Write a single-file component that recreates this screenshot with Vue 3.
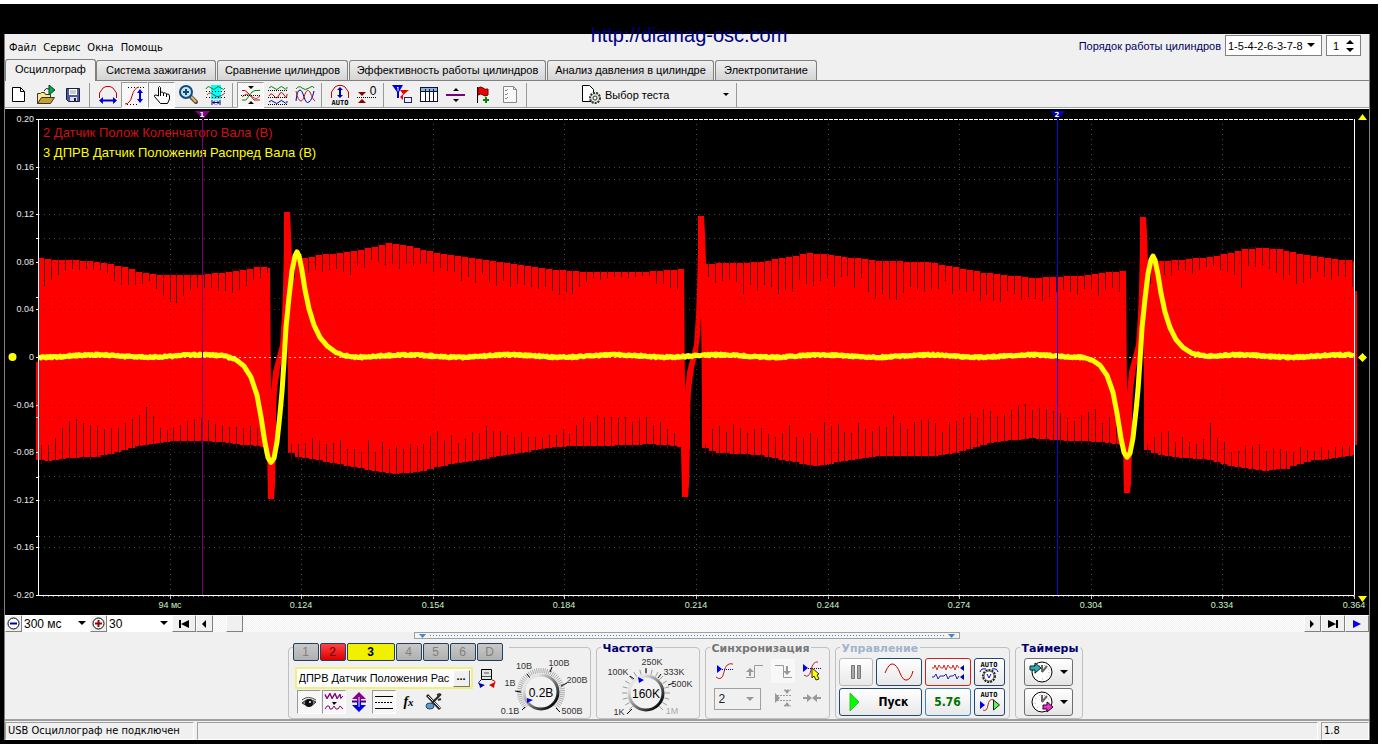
<script setup>
import { ref } from 'vue'

const menu = ['Файл', 'Сервис', 'Окна', 'Помощь']
const tabs = [
  { label: 'Осциллограф', cls: 'w91' },
  { label: 'Система зажигания', cls: 'w120' },
  { label: 'Сравнение цилиндров', cls: 'w131' },
  { label: 'Эффективность работы цилиндров', cls: 'w197' },
  { label: 'Анализ давления в цилиндре', cls: 'w167' },
  { label: 'Электропитание', cls: 'w102' }
]
const activeTab = ref(0)
const channels = ['1', '2', '3', '4', '5', '6', 'D']
const channelName = ref('ДПРВ Датчик Положения Рас')

const Y0 = 357
const STEP = 47.6
const fmt = (v) => (v === 0 ? '0' : v.toFixed(2))
const yLabels = [0.2, 0.16, 0.12, 0.08, 0.04, 0, -0.04, -0.08, -0.12, -0.16, -0.2].map((v) => ({
  text: fmt(v),
  y: Math.round(Y0 - (v / 0.04) * STEP)
}))
const gridY = [0.16, 0.15, 0.12, 0.1, 0.08, 0.05, 0.04].flatMap((v) => [
  Math.round(Y0 - (v / 0.04) * STEP) + 0.5,
  Math.round(Y0 + (v / 0.04) * STEP) + 0.5
])
const xTicks = [
  [170, '94 мс'], [301, '0.124'], [433, '0.154'], [564, '0.184'], [696, '0.214'],
  [828, '0.244'], [959, '0.274'], [1091, '0.304'], [1222, '0.334'], [1354, '0.364']
]

function at(points, x) {
  for (let i = 1; i < points.length; i++) {
    if (x <= points[i][0]) {
      const [x0, y0] = points[i - 1]
      const [x1, y1] = points[i]
      return y0 + ((y1 - y0) * Math.max(0, x - x0)) / (x1 - x0)
    }
  }
  return points[points.length - 1][1]
}
const noise = (n) => {
  const s = Math.sin(n * 12.9898 + 4.1) * 43758.5453
  return s - Math.floor(s)
}

const blocks = [
  {
    from: 38, to: 270,
    top: [[38, 257], [55, 260], [78, 260], [105, 263], [125, 267], [140, 272], [160, 275], [200, 275], [220, 273], [245, 270], [258, 267], [270, 268]],
    bottom: [[38, 459], [50, 461], [70, 458], [95, 457], [112, 454], [130, 448], [150, 444], [170, 441], [205, 441], [230, 443], [262, 447], [270, 448]],
    topDip: [[38, 34], [60, 16], [70, 10], [105, 8], [120, 20], [150, 8], [172, 32], [195, 12], [235, 24], [270, 6]],
    lowDip: [[38, 20], [50, 12], [75, 38], [90, 34], [120, 20], [152, 36], [166, 8], [180, 16], [205, 22], [235, 16], [270, 22]]
  },
  {
    from: 288, to: 684,
    top: [[288, 262], [302, 259], [320, 255], [343, 253], [365, 249], [390, 243], [410, 246], [429, 251], [455, 256], [477, 259], [500, 262], [520, 265], [547, 269], [590, 272], [638, 272], [660, 271], [684, 269]],
    bottom: [[288, 451], [295, 456], [317, 460], [343, 465], [370, 470], [397, 474], [424, 471], [450, 464], [483, 459], [515, 454], [547, 448], [574, 446], [606, 446], [654, 444], [684, 447]],
    topDip: [[288, 18], [320, 22], [390, 26], [430, 20], [470, 30], [520, 22], [565, 32], [590, 8], [650, 7], [672, 30], [684, 24]],
    lowDip: [[288, 16], [340, 28], [400, 30], [440, 32], [500, 28], [550, 12], [590, 28], [645, 32], [684, 10]]
  },
  {
    from: 702, to: 1125,
    top: [[702, 264], [734, 263], [761, 262], [783, 258], [810, 253], [847, 257], [879, 261], [927, 262], [959, 268], [986, 273], [1013, 276], [1034, 278], [1050, 277], [1077, 276], [1100, 273], [1125, 271]],
    bottom: [[702, 447], [718, 453], [761, 455], [788, 461], [817, 466], [852, 460], [879, 456], [933, 456], [959, 452], [986, 444], [1029, 438], [1056, 440], [1099, 442], [1125, 445]],
    topDip: [[702, 20], [730, 32], [780, 38], [850, 30], [880, 44], [930, 30], [990, 28], [1060, 26], [1125, 24]],
    lowDip: [[702, 22], [760, 32], [820, 38], [860, 40], [930, 36], [1000, 34], [1060, 28], [1125, 32]]
  },
  {
    from: 1144, to: 1354,
    top: [[1144, 262], [1170, 261], [1200, 258], [1222, 255], [1240, 250], [1256, 248], [1280, 249], [1300, 254], [1325, 258], [1354, 261]],
    bottom: [[1144, 448], [1156, 454], [1180, 458], [1205, 459], [1230, 466], [1262, 471], [1285, 469], [1310, 461], [1335, 458], [1354, 455]],
    topDip: [[1144, 32], [1175, 20], [1215, 14], [1240, 40], [1256, 28], [1270, 26], [1290, 34], [1310, 26], [1354, 30]],
    lowDip: [[1144, 14], [1165, 24], [1200, 24], [1215, 40], [1235, 18], [1260, 26], [1300, 14], [1354, 10]]
  }
]

const PITCH = 6.95
let body = ''
let notches = ''
blocks.forEach((b, k) => {
  const tops = []
  const lows = []
  let i = 0
  for (let x = b.from; x < b.to - 1; x += PITCH, i++) {
    const end = Math.min(x + PITCH, b.to)
    const mid = (x + end) / 2
    const t = Math.round(at(b.top, mid))
    const l = Math.round(at(b.bottom, mid))
    tops.push(`${x} ${t} L${end} ${t}`)
    lows.unshift(`${end} ${l} L${x} ${l}`)
    if (i > 0) {
      const spread = k === 0 ? 0.15 : 0.5
      const up = at(b.topDip, x) * (1 - spread * noise(i + k * 97))
      const dn = at(b.lowDip, x) * (1.1 - spread * noise(i + 31 + k * 53))
      const px = Math.floor(x) + 0.5
      const qx = Math.floor(x - 3) + 0.5
      notches += `M${px} ${t - 2}V${Math.round(t + up)}`
      notches += `M${qx} ${l + 3}V${Math.round(l - dn)}`
    }
  }
  body += `M${tops.join('L')}L${lows.join('L')}Z`
})

const events = [
  { x: 271, tip: 499, peak: 212 },
  { x: 685, tip: 497, peak: 216 },
  { x: 1127, tip: 493, peak: 217 }
]
const spikes = events
  .map(({ x, tip, peak }) => {
    const p = [
      [-3, tip], [3, tip], [4, 484], [5, 447], [5, 415], [6, 390], [9, 368], [13, 352], [15, 335],
      [16, 315], [17, 395], [18, 447], [24, 440], [21, 262], [20, 234], [19, peak], [13, peak],
      [13, 248], [12, 290], [11, 315], [9, 345], [5, 360], [2, 372], [0, 392], [-1, 270], [-5, 275], [-4, 447]
    ]
    return 'M' + p.map(([dx, y]) => `${x + dx} ${y}`).join('L') + 'Z'
  })
  .join('')

function cam(x) {
  const pts = [
    [0, 0], [225, 0], [236, 3], [244, 9], [251, 20], [257, 38], [261, 60], [265, 86], [268, 101], [271, 106],
    [274, 102], [277, 86], [280, 58], [282, 36], [284, 6], [286, -28], [289, -58], [292, -84], [295, -99],
    [297, -103], [299, -99], [302, -84], [305, -65], [309, -46], [314, -30], [320, -18], [327, -10], [336, -4], [348, -1], [356, 0], [9999, 0]
  ]
  return at(pts, x)
}
let cams = ''
for (let x = 39; x <= 1354; x += 1) {
  const pulse = x < 700 ? cam(x) : cam(x - 856) * 0.965
  const rip = 1.2 * Math.cos(((x - 95) / 104) * 2 * Math.PI)
  const jit = Math.abs(pulse) < 3 ? (noise(x) - 0.5) * 1.6 : 0
  cams += `${cams ? 'L' : 'M'}${x} ${(Y0 - 1 + pulse - rip + jit).toFixed(1)}`
}

function ticks(cx, cy, r1, r2, n) {
  let d = ''
  for (let i = 0; i <= n; i++) {
    const a = ((135 + (270 * i) / n) * Math.PI) / 180
    d += `M${(cx + r1 * Math.cos(a)).toFixed(1)} ${(cy + r1 * Math.sin(a)).toFixed(1)}L${(cx + r2 * Math.cos(a)).toFixed(1)} ${(cy + r2 * Math.sin(a)).toFixed(1)}`
  }
  return d
}
const voltTicks = ticks(54, 44, 19, 24, 50)
const freqTicks = ticks(50, 44, 19, 24, 18)
</script>

<template>
  <div class="desk">
    <a class="site" href="#">http://diamag-osc.com</a>
    <main class="win">
      <header class="top">
        <nav class="menu"><button v-for="m in menu" :key="m">{{ m }}</button></nav>
        <div class="order">
          <label for="order">Порядок работы цилиндров</label>
          <span class="sel w97">
            <select id="order"><option>1-5-4-2-6-3-7-8</option></select>
            <svg width="8" height="5"><path d="M0 0H8L4 4Z" /></svg>
          </span>
          <span class="sel spin">
            <input aria-label="Цилиндр" value="1" />
            <svg width="8" height="14"><path d="M0 5L4 1L8 5ZM0 9H8L4 13Z" /></svg>
          </span>
        </div>
      </header>

      <div class="tabs" role="tablist">
        <button v-for="(t, i) in tabs" :key="t.label" role="tab" :class="['tab', t.cls, { on: i === activeTab }]" @click="activeTab = i">{{ t.label }}</button>
      </div>

      <div class="tools">
        <button class="tb" aria-label="Новый"><svg viewBox="0 0 22 22"><path d="M4.500 3.500H12.500L16.500 7.500V17.500H4.500Z" fill="#fff" stroke="#000" /><path d="M12.500 3.500V7.500H16.500" fill="none" stroke="#000" /></svg></button>
        <button class="tb" aria-label="Открыть"><svg viewBox="0 0 22 22"><path d="M2.500 19.500V9.500H5.500L6.500 8.500H9.500L10.500 10.500H15.500V13" fill="#ffe98a" stroke="#333" /><path d="M2.500 19.500L6.500 13.500H19.500L15.500 19.500Z" fill="#c8a032" stroke="#333" /><path d="M14 1L20 6L14 11Z" fill="#0a4" stroke="#042" /><path d="M9 7Q11 3 14 5" fill="none" stroke="#222" /></svg></button>
        <button class="tb" aria-label="Сохранить"><svg viewBox="0 0 22 22"><path d="M4.500 4.500H17.500V17.500H6.500L4.500 15.500Z" fill="#4a5a9c" stroke="#181c44" /><rect x="7" y="5" width="8" height="6" fill="#fff" /><path d="M8 7H14M8 9H14" stroke="#999" /><rect x="8" y="13" width="7" height="4" fill="#ddd" /><rect x="12" y="14" width="2" height="3" fill="#181c44" /></svg></button>
        <i class="sep"></i>
        <button class="tb" aria-label="Ширина"><svg viewBox="0 0 22 22"><path d="M2.500 14V9L6 4L9 2.500H13L16 4L19.500 9V14" fill="none" stroke="#c00" /><path d="M5 16.500H17" stroke="#00c" stroke-width="2" /><path d="M2 16.500L6 13V20ZM20 16.500L16 13V20Z" fill="#00d" /></svg></button>
        <button class="tb down" aria-label="Высота"><svg viewBox="0 0 22 22"><path d="M4 3.500H21M3 20.500H15" stroke="#000" stroke-dasharray="1 2" /><path d="M1 20Q6 20 8 12T15 3" fill="none" stroke="#c00" /><path d="M16 7V17" stroke="#00c" stroke-width="2" /><path d="M13 9L16 5L19 9ZM13 15H19L16 19Z" fill="#00d" /></svg></button>
        <button class="tb down" aria-label="Рука"><svg viewBox="0 0 22 22"><path d="M7.500 12V3.500Q8.500 1.500 9.500 3.500V8.500Q11 7 12.500 9Q14.500 8 15.500 10Q18.500 9.500 18.500 12V15L16.500 19.500H9.500L3.500 12.500Q3 10.500 5 11Z" fill="#fff" stroke="#000" /><path d="M9.500 8V12M12.500 9V12M15.500 10V13" stroke="#000" /></svg></button>
        <button class="tb" aria-label="Лупа"><svg viewBox="0 0 22 22"><path d="M12 12L18 18" stroke="#5a4a30" stroke-width="4" stroke-linecap="round" /><path d="M13 12.500L18 18" stroke="#d8b878" stroke-width="2" /><circle cx="8" cy="8" r="6" fill="#bfe4fb" stroke="#124a78" stroke-width="2" /><path d="M5 8H11M8 5V11" stroke="#104a80" stroke-width="2" /></svg></button>
        <button class="tb" aria-label="Диапазон"><svg viewBox="0 0 22 22"><rect x="6" y="1" width="10" height="14" fill="#0ff" /><path d="M1 5Q3 1 6 4T11 4T16 4T20 4" fill="none" stroke="#080" /><path d="M2 11Q5 7 9 11T20 9" fill="none" stroke="#a33" /><path d="M1 7.500H21M1 13.500H21" stroke="#000" stroke-dasharray="1 2" /><path d="M7 16V21M15 16V21M8 18.500H14M10 16.500L8 18.500L10 20.500M12 16.500L14 18.500L12 20.500" fill="none" stroke="#008" /></svg></button>
        <i class="sep"></i>
        <button class="tb down" aria-label="Совместить"><svg viewBox="0 0 22 22"><path d="M2 6.500H5L8 9L14 16H20" fill="none" stroke="#c00" /><path d="M2 16H6L12 8L15 6.500H20" fill="none" stroke="#080" /><path d="M2 13L6 10L11 12L16 15L20 12" fill="none" stroke="#a44" /><path d="M1 11.500H21" stroke="#000" stroke-dasharray="1 1" /><path d="M8 2H14L11 5ZM8 20H14L11 17Z" /></svg></button>
        <button class="tb" aria-label="Разнести"><svg viewBox="0 0 22 22"><g fill="none"><path d="M2 4Q4 1 7 4T12 4T17 4T20 3" stroke="#080" /><path d="M2 12Q4 8 7 12T12 11T17 11T20 10" stroke="#c00" /><path d="M2 18Q4 15 7 18T12 18T17 18T20 17" stroke="#009" /><path d="M1 6.500H21M1 13.500H21M1 20.500H21" stroke="#000" stroke-dasharray="1 1" /></g></svg></button>
        <button class="tb" aria-label="Наложить"><svg viewBox="0 0 22 22"><g fill="none"><path d="M2 5Q5 1 8 4T15 4T20 4" stroke="#080" /><path d="M2 17Q3 6 6 6Q8 6 10 13Q12 20 15 18Q18 16 20 7" stroke="#00a" /><path d="M2 7Q4 17 7 17Q9 17 11 10Q13 4 16 8Q19 16 21 17" stroke="#b22" /></g></svg></button>
        <i class="sep"></i>
        <button class="tb" aria-label="Автомасштаб"><svg viewBox="0 0 22 22"><path d="M2.500 14V8L6 3L9 1.500H13L16 3L19.500 8V14" fill="none" stroke="#c00" /><path d="M11 5V12" stroke="#00a" stroke-width="2" /><path d="M8 6L11 3L14 6ZM8 11H14L11 14Z" fill="#00a" /><text x="11" y="21" class="mini">AUTO</text></svg></button>
        <button class="tb" aria-label="Ноль"><svg viewBox="0 0 22 22"><path d="M1 13.500H21" stroke="#000" stroke-dasharray="1 1" /><path d="M2 8H10L6 12ZM2 19H10L6 15Z" fill="#800" /><text x="17" y="11" class="zero">0</text></svg></button>
        <i class="sep"></i>
        <button class="tb" aria-label="Фильтр"><svg viewBox="0 0 22 22"><path d="M1 1H12L8 8V14H6V8Z" fill="#00d" /><path d="M9 6H18L12 11L12 16L9 13L12 10Z" fill="#e00" /><path d="M6 4L7 3V7" stroke="#fff" fill="none" /><rect x="13.500" y="13.500" width="7" height="5" fill="#eef" stroke="#225" /></svg></button>
        <button class="tb" aria-label="Таблица"><svg viewBox="0 0 22 22"><rect x="2.500" y="3.500" width="17" height="14" fill="#fff" stroke="#113" /><rect x="3" y="4" width="16" height="3" fill="#8ab4e0" /><path d="M3 7.500H19M7.500 5V17M11.500 5V17M15.500 5V17" stroke="#113" /></svg></button>
        <button class="tb" aria-label="Линия"><svg viewBox="0 0 22 22"><path d="M1 11H20" stroke="#707" stroke-width="2" /><path d="M8 7L11 4L14 7ZM8 15H14L11 18Z" /></svg></button>
        <button class="tb" aria-label="Метка"><svg viewBox="0 0 22 22"><path d="M5.500 3V19" stroke="#000" /><path d="M6 4Q9 2 11 4T16 5V11Q13 13 11 11T6 11Z" fill="#e00" stroke="#600" /><path d="M14 13V19M11 16H17" stroke="#080" stroke-width="2" /></svg></button>
        <button class="tb" aria-label="Отчёт"><svg viewBox="0 0 22 22"><path d="M4.500 2.500H14.500L17.500 5.500V18.500H4.500Z" fill="#f8f8f8" stroke="#888" /><path d="M14.500 2.500V5.500H17.500M6 6L7 7L9 5M6 10L7 11L9 9M6 14L7 15L9 13" fill="none" stroke="#888" /></svg></button>
        <i class="sep"></i>
        <button class="test">
          <svg width="22" height="22"><path d="M2.500 1.500H9.500L13.500 5.500V17.500H2.500Z" fill="#fff" stroke="#000" /><circle cx="15" cy="14" r="5" fill="#d8e4d8" stroke="#333" stroke-width="2" stroke-dasharray="2 1" /><circle cx="15" cy="14" r="2" fill="#fff" stroke="#333" /></svg>
          <span>Выбор теста</span>
          <svg width="6" height="4"><path d="M0 0H6L3 3Z" /></svg>
        </button>
        <i class="sep"></i>
      </div>

      <svg class="plot" viewBox="5 109 1364 506" role="img" aria-label="Осциллограмма">
        <rect x="5" y="109" width="1364" height="506" fill="#000" />
        <g class="grid" stroke="#4c4c4c">
          <path v-for="y in gridY" :key="y" :d="`M39 ${y}H1354`" />
          <path v-for="t in xTicks.slice(0, 9)" :key="t[0]" :d="`M${t[0] + 0.5} 124V595`" />
        </g>
        <text x="43" y="137" class="leg r">2 Датчик Полож Коленчатого Вала (В)</text>
        <text x="43" y="157" class="leg y">3 ДПРВ Датчик Положения Распред Вала (В)</text>
        <path :d="body" fill="#f00" />
        <path :d="notches" class="notch" />
        <path :d="spikes" fill="#f00" />
        <rect x="36" y="362" width="2" height="98" fill="#f00" />
        <rect x="1354" y="291" width="3" height="154" fill="#f00" />
        <g class="grid" stroke="#700" opacity="0.6">
          <path v-for="y in gridY.filter((v) => v > 262 && v < 470)" :key="y" :d="`M39 ${y}H1354`" />
          <path v-for="t in xTicks.slice(0, 9)" :key="t[0]" :d="`M${t[0] + 0.5} 264V450`" />
        </g>
        <path d="M39 119.500H1354" stroke="#fff" stroke-dasharray="4 1" />
        <path d="M38 595.500H1354.500V119M38.500 119V596" fill="none" stroke="#fff" />
        <path v-for="l in yLabels" :key="l.y" :d="`M36 ${l.y + 0.5}H38`" stroke="#fff" />
        <path v-for="y in [178, 238, 297, 417, 477, 536]" :key="y" :d="`M36 ${y + 0.5}H38`" stroke="#fff" />
        <path v-for="t in xTicks" :key="t[0]" :d="`M${t[0] + 0.5} 596V599`" stroke="#bbb" />
        <path d="M43 596.500H1354" class="grid" stroke="#888" />
        <path :d="cams" fill="none" stroke="#ff0" stroke-width="5" stroke-linejoin="round" />
        <path d="M39 357.500H1354" stroke="#fff" stroke-dasharray="2 3" opacity="0.8" />
        <text v-for="l in yLabels" :key="l.text" x="34" :y="l.y + 3" class="ax e">{{ l.text }}</text>
        <text v-for="t in xTicks" :key="t[1]" :x="t[0]" y="608" class="ax m">{{ t[1] }}</text>
        <path d="M202.500 118V595" stroke="#707" />
        <path d="M195 111H210L203 119Z" fill="#808" />
        <text x="202" y="117" class="cur">1</text>
        <path d="M1057.500 118V595" stroke="#0a0ad8" />
        <path d="M1050 111H1065L1058 119Z" fill="#00c" />
        <text x="1057" y="117" class="cur">2</text>
        <circle cx="12.500" cy="357" r="4" fill="#ff0" />
        <path d="M1362.500 353L1367 357.500L1362.500 362L1358 357.500ZM1358 120L1362.500 114L1367 120ZM1358 596H1367L1362.500 602Z" fill="#ff0" />
      </svg>

      <div class="scroll">
        <button class="rb w17" aria-label="Меньше"><svg width="13" height="13"><circle cx="6.500" cy="6.500" r="5.500" fill="#fff" stroke="#000" /><path d="M3 6.500H10" stroke="#00a" stroke-width="2" /></svg></button>
        <span class="pick w68"><select aria-label="Развёртка"><option>300 мс</option></select><svg width="8" height="5"><path d="M0 0H8L4 4Z" /></svg></span>
        <button class="rb w17" aria-label="Больше"><svg width="13" height="13"><circle cx="6.500" cy="6.500" r="5.500" fill="#fff" stroke="#000" /><path d="M3 6.500H10M6.500 3V10" stroke="#900" stroke-width="2" /></svg></button>
        <span class="pick w65"><select aria-label="Масштаб"><option>30</option></select><svg width="8" height="5"><path d="M0 0H8L4 4Z" /></svg></span>
        <button class="rb w24" aria-label="В начало"><svg width="12" height="8"><path d="M1 0H3V8H1ZM11 0V8L3 4Z" /></svg></button>
        <button class="rb w17" aria-label="Назад"><svg width="5" height="8"><path d="M4 0V8L0 4Z" /></svg></button>
        <div class="track"><button class="rb w17 thumb" aria-label="Позиция"></button></div>
        <button class="rb w17" aria-label="Вперёд"><svg width="5" height="8"><path d="M0 0V8L4 4Z" /></svg></button>
        <button class="rb w24" aria-label="В конец"><svg width="12" height="8"><path d="M9 0H11V8H9ZM1 0V8L9 4Z" /></svg></button>
        <button class="rb w24" aria-label="Воспроизвести"><svg width="9" height="8"><path d="M0 0V8L8 4Z" fill="#00f" /></svg></button>
      </div>

      <section class="panel">
        <div class="split"><svg width="7" height="4"><path d="M0 0H7L3.500 4Z" fill="#48c" /></svg><i></i><svg width="7" height="4"><path d="M0 0H7L3.500 4Z" fill="#48c" /></svg></div>
        <div class="groups">
          <section class="grp g1">
            <div class="lcol">
              <div class="chs"><button v-for="c in channels" :key="c" :class="['ch', 'c' + c]">{{ c }}</button></div>
              <div class="nrow">
                <div class="name"><input v-model="channelName" aria-label="Канал" /><button aria-label="Выбрать">...</button></div>
                <svg width="20" height="20"><path d="M4.500 1.500H14.500V11.500H4.500Z" fill="#dfe8df" stroke="#000" /><path d="M5 8.500H14M7 5H12" stroke="#555" /><path d="M4 12Q0 15 3 17" fill="none" stroke="#00a" /><path d="M2 15L8 17L3 20Z" fill="#00a" /><path d="M15 12Q20 13 17 16" fill="none" stroke="#d00" /><path d="M18 14L12 17L17 20Z" fill="#d00" /></svg>
              </div>
              <div class="irow">
                <button class="ib down" aria-label="Видимость"><svg viewBox="0 0 22 22"><path d="M4 12Q10 6 18 11Q12 18 4 12Z" fill="#888" stroke="#333" /><circle cx="11" cy="12" r="4" fill="#111" /><circle cx="12" cy="11" r="1" fill="#fff" /><path d="M4 9Q10 4 18 9" fill="none" stroke="#444" /></svg></button>
                <button class="ib down" aria-label="Сглаживание"><svg viewBox="0 0 22 22"><path d="M2 3L4 7L7 2L9 7L12 2L14 7L17 3L18 7L20 5" fill="none" stroke="#808" /><path d="M2 4L4 8L7 3L9 8L12 3L14 8L17 4L18 8" fill="none" stroke="#808" /><path d="M9 11H14L11 14Z" /><path d="M2 18L4 15L6 15L7 18L9 18L11 15L13 18L15 18L17 15L20 18" fill="none" stroke="#808" /></svg></button>
                <button class="ib" aria-label="Смещение"><svg viewBox="0 0 22 22"><path d="M11 1L18 8H13V11H9V8H4Z" fill="#808" /><path d="M11 21L18 14H13V11H9V14H4Z" fill="#00e" /><path d="M4 10.500H18" stroke="#408" stroke-width="2" /><path d="M11 6V16" stroke="#ddf" /></svg></button>
                <button class="ib down" aria-label="Линии"><svg viewBox="0 0 22 22"><path d="M2 5.500H20M2 17.500H20" stroke="#000" /><path d="M2 11.500H20" stroke="#000" stroke-dasharray="2 1" /></svg></button>
                <button class="ib" aria-label="Функция"><span class="fx">f<small>x</small></span></button>
                <button class="ib" aria-label="Настройки"><svg viewBox="0 0 22 22"><path d="M4 4L17 18" stroke="#222" stroke-width="3" /><path d="M5 5L17 17" stroke="#eee" /><path d="M18 3L9 12" stroke="#222" stroke-width="2" /><path d="M14 4L17 3M18 8L15 9" stroke="#333" stroke-width="2" /><ellipse cx="7" cy="15" rx="4" ry="3" fill="#69c" stroke="#246" /></svg></button>
              </div>
            </div>
            <svg class="kn" width="102" height="70">
              <path :d="voltTicks" stroke="#aaa" /><path d="M35 62L38 59M28 43L34 44M40 26L43 30M63 24L65 19M74 38L80 35M69 60L73 64" stroke="#000" />
              <defs><linearGradient id="k" x1="0" y1="0" x2="1" y2="1"><stop offset="0.2" stop-color="#e4e4e4" /><stop offset="0.5" stop-color="#888" /><stop offset="0.9" stop-color="#000" /></linearGradient></defs>
              <circle cx="54" cy="44" r="17" fill="#f2f2f2" stroke="url(#k)" stroke-width="3" /><path d="M40 50L46 52L40 55Z" fill="#00e" />
              <text x="54" y="49" class="kv">0.2В</text>
              <g class="kl"><text x="23" y="66">0.1В</text><text x="23" y="38">1В</text><text x="37" y="21">10В</text><text x="72" y="18">100В</text><text x="90" y="35">200В</text><text x="85" y="66">500В</text></g>
            </svg>
          </section>

          <section class="grp g2">
            <h2>Частота</h2>
            <svg class="kn2" width="102" height="62">
              <g transform="translate(-1 -7)">
                <path :d="freqTicks" stroke="#999" /><path d="M36 60L31 65M50 24V19M38 30L34 27M62 29L65 25M72 36L78 34" stroke="#000" />
                <circle cx="50" cy="44" r="17" fill="#f2f2f2" stroke="url(#k)" stroke-width="3" /><path d="M42 28L48 31L43 34Z" fill="#00e" />
                <text x="50" y="49" class="kv">160K</text>
                <g class="kl"><text x="23" y="66">1K</text><text x="22" y="26">100K</text><text x="56" y="16">250K</text><text x="78" y="26">333K</text><text x="86" y="38">500K</text><text x="76" y="65" fill="#aaa">1M</text></g>
              </g>
            </svg>
          </section>

          <section class="grp g3">
            <h2 class="gray">Синхронизация</h2>
            <div class="sync">
              <button class="ib" aria-label="Уровень"><svg viewBox="0 0 22 22"><path d="M2 17Q8 22 10 12T19 4" fill="none" stroke="#b22" /><path d="M3 5V13L8 9Z" fill="#00e" /><path d="M8 9.500H20" stroke="#00a" stroke-dasharray="1 1" /></svg></button>
              <button class="ib" aria-label="Фронт"><svg viewBox="0 0 22 22"><path d="M3 17.500H11.500V5.500H20" fill="none" stroke="#999" /><path d="M7 8L3 12H11ZM6 12H8V16H6Z" fill="#999" /></svg></button>
              <button class="ib dn" aria-label="Спад"><svg viewBox="0 0 22 22"><path d="M3 5.500H11.500V17.500H20" fill="none" stroke="#999" /><path d="M15 15L11 11H19ZM14 6H16V11H14Z" fill="#999" /></svg></button>
              <button class="ib" aria-label="Выбор"><svg viewBox="0 0 22 22"><path d="M3 15Q8 19 10 10T17 2" fill="none" stroke="#b22" /><path d="M2 4V12L7 8Z" fill="#00e" /><path d="M7 8.500H20" stroke="#00a" stroke-dasharray="1 1" /><path d="M11 8L18 14L16 15L18 19L15 20L13 16L11 18Z" fill="#ff0" stroke="#330" /></svg></button>
              <span class="sel2"><select aria-label="Канал синхронизации" disabled><option>2</option></select><svg width="8" height="5"><path d="M0 0H8L4 4Z" fill="#999" /></svg></span>
              <button class="ib" aria-label="Гистерезис"><svg viewBox="0 0 22 22"><path d="M3 6V16L8 11ZM12 3H18L15 7ZM12 19H18L15 15Z" fill="#999" /><path d="M5 8.500H20M5 13.500H20M12 3H19M12 19H19" stroke="#999" stroke-dasharray="2 1" /></svg></button>
              <button class="ib" aria-label="Центр"><svg viewBox="0 0 22 22"><path d="M2 10H6V7L11 11L6 15V12H2ZM20 10H16V7L11 11L16 15V12H20Z" fill="#999" /></svg></button>
            </div>
          </section>

          <section class="grp g4">
            <h2 class="pale">Управление</h2>
            <div class="ctl">
              <button class="cb off" aria-label="Пауза"><svg width="12" height="16"><path d="M1.500 1.500H4.500V14.500H1.500ZM7.500 1.500H10.500V14.500H7.500Z" fill="#aaa" stroke="#777" /></svg></button>
              <button class="cb navy" aria-label="Сигнал"><svg width="30" height="20"><path d="M1 11Q5 1 9 2Q13 3 16 11Q19 19 23 18Q27 17 29 9" fill="none" stroke="#c00" /></svg></button>
              <button class="cb red" aria-label="Запись"><svg width="34" height="20"><path d="M1 6H3L4 3L6 8L8 3L10 6H12L13 3L15 8L17 3L19 6H21L22 3L24 8L26 3L28 6" fill="none" stroke="#c33" /><path d="M1 15H3L5 12L7 17L9 14H13L15 12L17 17L19 14H22L24 12L26 17L28 14" fill="none" stroke="#22a" /><path d="M29 6L33 3V9ZM29 15L33 12V18Z" fill="#00a" /></svg></button>
              <button class="cb navy" aria-label="Авто вольты"><svg width="26" height="24"><text x="13" y="7" class="mini">AUTO</text><circle cx="13" cy="16" r="6" fill="#fff" stroke="#222" stroke-width="2" stroke-dasharray="2 1" /><circle cx="13" cy="16" r="5" fill="#fff" stroke="#555" /><path d="M11 14L13 18L15 14" fill="none" stroke="#00c" /><path d="M4 12Q5 8 10 9M22 12Q21 8 16 9" fill="none" stroke="#00c" /></svg></button>
              <button class="cb navy start"><svg width="12" height="20"><path d="M1 1V19L10 10Z" fill="#0f0" stroke="#3b3" /></svg><b>Пуск</b></button>
              <output class="cb blue">5.76</output>
              <button class="cb navy" aria-label="Авто пуск"><svg width="26" height="24"><text x="13" y="7" class="mini">AUTO</text><path d="M7 20Q11 22 12 15T18 10" fill="none" stroke="#c22" /><path d="M4 11L9 15L4 19Z" fill="#00e" /><path d="M17.500 10V20L23.500 15Z" fill="#6e6" stroke="#030" /></svg></button>
            </div>
          </section>

          <section class="grp g5">
            <h2>Таймеры</h2>
            <button class="tm" aria-label="Таймер старта"><svg width="26" height="24"><circle cx="13" cy="12" r="10" fill="#fff" stroke="#000" /><path d="M13 12V5M13 12L18 6" stroke="#666" stroke-width="2" /><circle cx="13" cy="12" r="7" fill="none" stroke="#999" stroke-dasharray="1 4" /><path d="M1 6H6V3L12 8L6 13V10H1Z" fill="#3ab" stroke="#022" /></svg><svg width="8" height="5"><path d="M0 0H8L4 4Z" /></svg></button>
            <button class="tm" aria-label="Таймер стопа"><svg width="26" height="24"><circle cx="13" cy="12" r="10" fill="#fff" stroke="#000" /><path d="M13 12V5M13 12L18 6" stroke="#666" stroke-width="2" /><circle cx="13" cy="12" r="7" fill="none" stroke="#999" stroke-dasharray="1 4" /><path d="M14 15H18V12L24 17L18 22V19H14Z" fill="#e3c" stroke="#202" /></svg><svg width="8" height="5"><path d="M0 0H8L4 4Z" /></svg></button>
          </section>
        </div>
      </section>

      <footer class="status"><span class="s1">USB Осциллограф не подключен</span><span class="s2"></span><span class="s3">1.8</span></footer>
    </main>
  </div>
</template>

<style>
body { margin: 0; background: #000; }
</style>

<style scoped>
* { box-sizing: border-box; }
.desk { position: relative; min-height: 100vh; background: #000; border-top: 4px solid #fff; border-right: 4px solid #fff; padding: 30px 8px 4px 4px; display: flex; flex-direction: column; font-family: "Liberation Sans", Arial, sans-serif; font-size: 11px; line-height: 14px; color: #000; }
.site { position: absolute; top: 19px; left: 0; right: 0; text-align: center; font-size: 20px; line-height: 24px; color: #000080; text-decoration: none; pointer-events: none; }
.win { flex: 1; background: #f0f0f0; border: solid #808080; border-width: 0 1px; display: flex; flex-direction: column; }
button { font: inherit; color: inherit; padding: 0; border: 0; background: none; display: flex; align-items: center; justify-content: center; white-space: nowrap; }
select, input { font: inherit; color: inherit; border: 0; padding: 0; margin: 0; background: none; appearance: none; min-width: 0; outline: 0; border-radius: 0; }
svg { display: block; flex: none; }
.top { display: flex; justify-content: space-between; height: 25px; }
.menu { display: flex; gap: 7px; padding: 2px 0 0 4px; font-family: "DejaVu Sans Condensed", "DejaVu Sans", sans-serif; font-size: 11px; }
.order { display: flex; align-items: center; gap: 4px; color: #000060; padding-right: 8px; height: 23px; }
.sel { display: flex; align-items: center; height: 21px; border: 1px solid #808080; background: #fff; color: #000; padding: 0 6px 0 2px; }
.sel select { flex: 1; }
.w97 { width: 97px; }
.spin { width: 35px; }
.spin input { width: 12px; flex: 1; padding-left: 4px; }
.tabs { display: flex; align-items: flex-end; height: 22px; border-bottom: 1px solid #808080; }
.tab { height: 20px; border: 1px solid #808080; border-bottom: 0; border-radius: 3px 3px 0 0; background: linear-gradient(#f0f0f0, #d4d4d4); margin-right: 1px; padding-bottom: 2px; }
.tab.on { height: 22px; margin: 0 0 -1px; background: #f0f0f0; padding-bottom: 4px; }
.w91 { width: 91px; } .w120 { width: 120px; } .w131 { width: 131px; } .w197 { width: 197px; } .w167 { width: 167px; } .w102 { width: 102px; }
.tools { display: flex; align-items: center; height: 28px; border-bottom: 1px solid #fff; box-shadow: inset 0 -1px #a0a0a0; }
.tb { width: 27px; height: 26px; border: 1px solid transparent; }
.tb svg { width: 22px; height: 22px; }
.down { border-color: #999 #fff #fff #999; background: repeating-conic-gradient(#f0f0f0 0 25%, #fff 0 50%) 0 0 / 2px 2px; }
.sep { width: 8px; height: 24px; flex: none; background: linear-gradient(#999, #999) 3px 0 / 1px 100% no-repeat; }
.mini { font: bold 7px "DejaVu Sans Mono", monospace; text-anchor: middle; }
.zero { font: 12px "Liberation Sans", sans-serif; text-anchor: middle; }
.test { width: 153px; margin-left: 49px; height: 24px; gap: 3px; }
.test span { flex: 1; text-align: left; }
.test svg:last-child { margin-right: 4px; }
.plot { width: 100%; height: auto; background: #000; }
.grid { stroke-dasharray: 1 4; shape-rendering: crispEdges; }
.notch { stroke: #500000; stroke-width: 1; shape-rendering: crispEdges; fill: none; }
.leg { font: 13px "Liberation Sans", sans-serif; }
.r { fill: #d01010; } .y { fill: #ff0; }
.ax { font: 9px "Liberation Sans", sans-serif; fill: #e8e8e8; }
.e { text-anchor: end; } .m { text-anchor: middle; fill: #c8f0c8; }
.cur { font: bold 7px "DejaVu Sans", sans-serif; fill: #fff; text-anchor: middle; }
.scroll { display: flex; height: 17px; background: #fff; }
.rb { background: #f0f0f0; border: 1px solid; border-color: #fff #808080 #808080 #fff; height: 17px; }
.w17 { width: 17px; } .w24 { width: 24px; }
.pick { display: flex; align-items: center; background: #fff; padding: 0 4px 0 2px; font-size: 12px; }
.pick select { flex: 1; }
.w68 { width: 68px; } .w65 { width: 65px; }
.track { flex: 1; padding-left: 13px; background: repeating-conic-gradient(#f0f0f0 0 25%, #fff 0 50%) 0 0 / 2px 2px; }
.panel { display: flex; flex-direction: column; align-items: center; flex: 1; border-bottom: 2px solid #a0a0a0; }
.split { width: 546px; height: 7px; border: 1px solid #a0a0a0; background: #f4f4f4; display: flex; align-items: center; gap: 4px; padding: 0 4px; }
.split i { flex: 1; height: 1px; background: repeating-linear-gradient(90deg, #48c 0 1px, transparent 1px 3px); }
.groups { display: flex; gap: 5px; margin-top: 8px; padding-right: 4px; }
.grp { height: 72px; border: 1px solid #c0c0c0; border-radius: 4px; position: relative; }
h2 { margin: -6px 0 0 4px; width: fit-content; padding: 0 2px; background: #f0f0f0; font: bold 11px/14px "DejaVu Sans", sans-serif; color: #000070; }
.gray { color: #777; } .pale { color: #a0b4cc; }
.g1 { width: 303px; display: flex; }
.lcol { width: 215px; flex: none; }
.chs { display: flex; gap: 1px; margin: -5px 0 0 4px; background: #f0f0f0; width: fit-content; padding-right: 6px; }
.ch { width: 26px; height: 18px; border: 1px solid #204060; border-radius: 2px; background: linear-gradient(#c8c8c8, #b0b0b0); color: #808080; font-size: 12px; }
.c2 { background: linear-gradient(#f44, #d00); color: #600; }
.c3 { width: 48px; background: #f0f000; color: #000; font-weight: bold; }
.nrow { display: flex; align-items: center; gap: 4px; margin: 6px 0 0 6px; }
.name { display: flex; align-items: center; width: 178px; height: 22px; border: 2px solid #f0f080; background: #fff; padding: 0 1px 0 2px; font-size: 11px; }
.name input { flex: 1; }
.name button { width: 17px; height: 17px; background: #f0f0f0; border: 1px solid; border-color: #fff #777 #777 #fff; font-weight: bold; padding-bottom: 4px; }
.irow { display: flex; margin: 1px 0 0 8px; gap: 1px; }
.ib { width: 24px; height: 24px; border: 1px solid transparent; }
.ib svg { width: 22px; height: 22px; }
.ib.down { border-color: #999 #fff #fff #999; }
.fx { font: italic bold 14px "Liberation Serif", serif; }
.fx small { font-size: 11px; }
.kn { margin-left: -17px; }
.kv { font: 12px "Liberation Sans", sans-serif; text-anchor: middle; }
.kl { font: 9px "Liberation Sans", sans-serif; text-anchor: middle; fill: #333; }
.g2 { width: 104px; }
.g3 { width: 125px; }
.sync { display: grid; grid-template-columns: 28px 28px 28px 24px; gap: 3px 1px; margin: 3px 0 0 7px; }
.ib.dn { background: #f8f8f8; }
.sel2 { grid-column: span 2; width: 47px; height: 22px; border: 1px solid #a0a0a0; display: flex; align-items: center; padding: 0 6px 0 4px; margin: 2px 0 0 1px; font-size: 12px; }
.sel2 select { flex: 1; color: #222; opacity: 1; }
.g4 { width: 175px; }
.ctl { display: grid; grid-template-columns: 34px 46px 46px 31px; gap: 2px 3px; margin: 2px 0 0 3px; }
.cb { height: 28px; border: 1px solid #b8b8b8; border-radius: 3px; background: linear-gradient(#fff, #e8e8e8); }
.navy { border-color: #204870; }
.red { border-color: #d02020; }
.blue { border-color: #4080b0; color: #007000; font: bold 12px "DejaVu Sans Condensed", "DejaVu Sans", sans-serif; display: flex; align-items: center; justify-content: center; }
.start { grid-column: span 2; justify-content: flex-start; padding-left: 9px; gap: 18px; font: bold 12px "DejaVu Sans Condensed", "DejaVu Sans", sans-serif; }
.g5 { width: 68px; }
.tm { width: 49px; height: 28px; margin: 2px 0 0 8px; gap: 5px; border: 1px solid #707070; border-radius: 3px; background: linear-gradient(#fff, #e4e4e4); }
.status { display: flex; height: 19px; gap: 3px; padding-top: 1px; font-family: "DejaVu Sans Condensed", "DejaVu Sans", sans-serif; }
.status span { border: 1px solid; border-color: #a0a0a0 #fff #fff #a0a0a0; padding: 1px 2px; }
.s1 { width: 189px; } .s2 { flex: 1; } .s3 { width: 48px; }
</style>
